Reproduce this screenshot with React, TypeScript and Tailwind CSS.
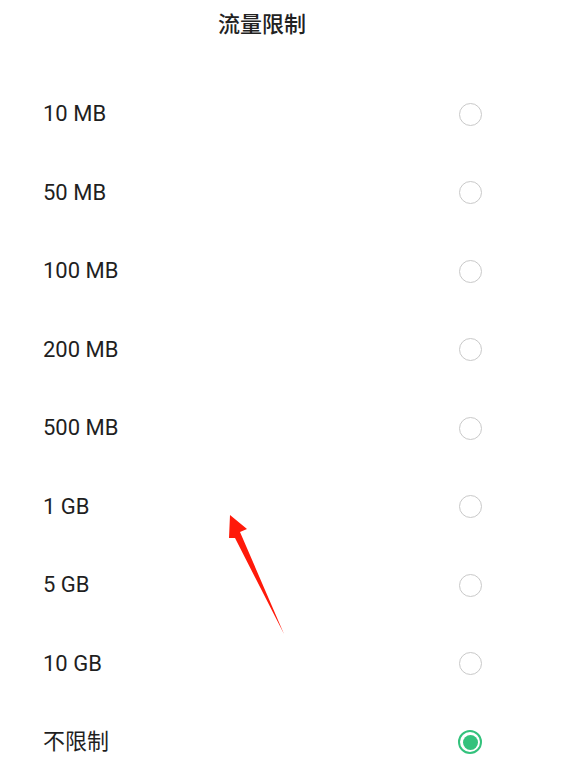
import React from "react";

const OPTIONS = ["10 MB", "50 MB", "100 MB", "200 MB", "500 MB", "1 GB", "5 GB", "10 GB", "不限制"];
const SELECTED = "不限制";

const Radio = ({ checked }: { checked: boolean }) =>
  checked ? (
    <div className="w-[24px] h-[24px] rounded-full border-[2px] border-[#33c27c] flex items-center justify-center">
      <div className="w-[15px] h-[15px] rounded-full bg-[#33c27c]" />
    </div>
  ) : (
    <div className="w-[23px] h-[23px] rounded-full border-[1.5px] border-[#c9c9c9]" />
  );

export default function App() {
  return (
    <div
      className="relative w-[580px] h-[768px] bg-white overflow-hidden text-[#1f1f1f]"
      style={{ fontFamily: 'Roboto, "Noto Sans CJK SC", sans-serif' }}
    >
      <div className="h-[75px] flex items-start pt-[9px] pl-[218px]">
        <h1 className="text-[22px] font-medium leading-[32px] text-[#222]">流量限制</h1>
      </div>

      <ul>
        {OPTIONS.map((o) => (
          <li key={o} className="h-[78.5px] flex items-center justify-between pl-[43px] pr-[98px]">
            <span className="text-[22px] leading-none">{o}</span>
            <Radio checked={o === SELECTED} />
          </li>
        ))}
      </ul>

      {/* red annotation arrow */}
      <svg className="absolute left-0 top-0 pointer-events-none" width="580" height="768">
        <polygon points="230,515 247,529 240,532 284,634 235,538 229,538" fill="#ff1a0a" />
      </svg>
    </div>
  );
}
